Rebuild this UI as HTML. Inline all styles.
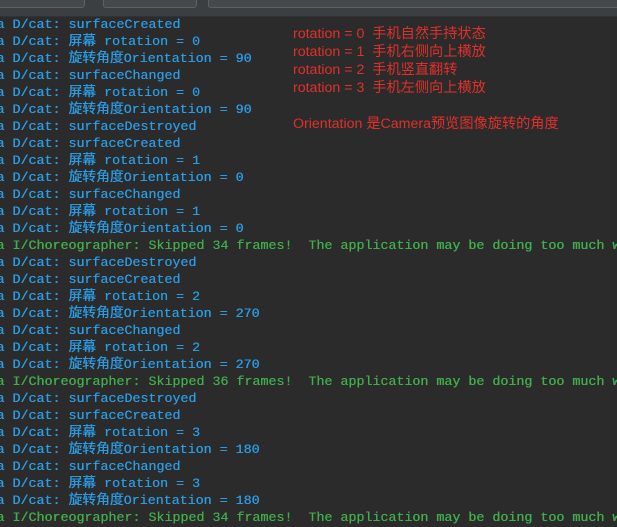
<!DOCTYPE html>
<html><head><meta charset="utf-8"><style>
body{margin:0;width:617px;height:524px;overflow:hidden;background:#2b2b2b;position:relative}
.top{position:absolute;left:0;top:0;width:617px;height:16px;background:#3c3f41;border-bottom:1px solid #323232}
.box{position:absolute;top:-4px;height:10px;border:1px solid #5e6163;border-radius:3px;background:#45494a}
.log{position:absolute;left:-3.6px;top:17px;font:13.33px/17px "Liberation Mono","Noto Sans CJK SC",monospace;white-space:pre;text-shadow:0.3px 0 0 currentColor}
.log i{font-style:normal;font-size:13.8px;line-height:17px}
.b{color:#2a9de6}.g{color:#41ae4c}
.red{position:absolute;left:293px;top:25px;font:14.2px/18px "Liberation Sans","Noto Sans CJK SC",sans-serif;color:#e0302b;white-space:pre}
</style></head><body>
<div class="top"><div class="box" style="left:-10px;width:93px"></div><div class="box" style="left:103px;width:92px"></div><div class="box" style="left:208px;width:420px"></div></div>
<div class="log"><span class="b">a D/cat: surfaceCreated
a D/cat: <i>屏幕</i> rotation = 0
a D/cat: <i>旋转角度</i>Orientation = 90
a D/cat: surfaceChanged
a D/cat: <i>屏幕</i> rotation = 0
a D/cat: <i>旋转角度</i>Orientation = 90
a D/cat: surfaceDestroyed
a D/cat: surfaceCreated
a D/cat: <i>屏幕</i> rotation = 1
a D/cat: <i>旋转角度</i>Orientation = 0
a D/cat: surfaceChanged
a D/cat: <i>屏幕</i> rotation = 1
a D/cat: <i>旋转角度</i>Orientation = 0</span>
<span class="g">a I/Choreographer: Skipped 34 frames!  The application may be doing too much work</span>
<span class="b">a D/cat: surfaceDestroyed
a D/cat: surfaceCreated
a D/cat: <i>屏幕</i> rotation = 2
a D/cat: <i>旋转角度</i>Orientation = 270
a D/cat: surfaceChanged
a D/cat: <i>屏幕</i> rotation = 2
a D/cat: <i>旋转角度</i>Orientation = 270</span>
<span class="g">a I/Choreographer: Skipped 36 frames!  The application may be doing too much work</span>
<span class="b">a D/cat: surfaceDestroyed
a D/cat: surfaceCreated
a D/cat: <i>屏幕</i> rotation = 3
a D/cat: <i>旋转角度</i>Orientation = 180
a D/cat: surfaceChanged
a D/cat: <i>屏幕</i> rotation = 3
a D/cat: <i>旋转角度</i>Orientation = 180</span>
<span class="g">a I/Choreographer: Skipped 34 frames!  The application may be doing too much work</span></div>
<div class="red">rotation = 0  手机自然手持状态
rotation = 1  手机右侧向上横放
rotation = 2  手机竖直翻转
rotation = 3  手机左侧向上横放

Orientation 是Camera预览图像旋转的角度</div>
</body></html>
